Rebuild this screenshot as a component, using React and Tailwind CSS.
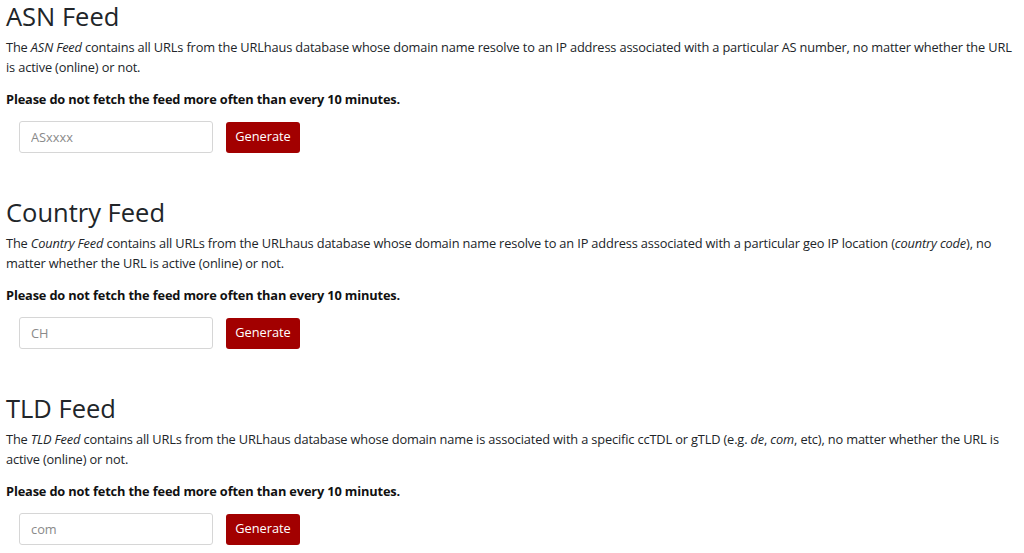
const FEEDS = [
  {
    title: 'ASN Feed',
    name: 'ASN Feed',
    after: (
      <>
        {' '}contains all URLs from the URLhaus database whose domain name resolve to an IP address associated with a
        particular AS number, no matter whether the URL is active (online) or not.
      </>
    ),
    placeholder: 'ASxxxx',
  },
  {
    title: 'Country Feed',
    name: 'Country Feed',
    after: (
      <>
        {' '}contains all URLs from the URLhaus database whose domain name resolve to an IP address associated with a
        particular geo IP location (<em>country code</em>), no matter whether the URL is active (online) or not.
      </>
    ),
    placeholder: 'CH',
  },
  {
    title: 'TLD Feed',
    name: 'TLD Feed',
    after: (
      <>
        {' '}contains all URLs from the URLhaus database whose domain name is associated with a specific ccTDL or gTLD
        (e.g. <em>de</em>, <em>com</em>, etc), no matter whether the URL is active (online) or not.
      </>
    ),
    placeholder: 'com',
  },
];

const FeedSection = ({ feed }) => (
  <section>
    <h2 className="text-[25.5px] leading-[28px] font-normal text-[#212529]">{feed.title}</h2>
    <p className="mt-[7px] text-[12.8px] leading-[20px] tracking-[-0.15px] text-[#212529]">
      The <em>{feed.name}</em>
      {feed.after}
    </p>
    <p className="mt-[12px] text-[12.8px] leading-[20px] tracking-[-0.15px] font-bold text-[#111]">
      Please do not fetch the feed more often than every 10 minutes.
    </p>
    <div className="mt-[12px] ml-[13px] flex items-center gap-[13px]">
      <input
        type="text"
        placeholder={feed.placeholder}
        className="h-[32px] w-[194px] rounded-[3px] border border-[#d6d6d6] bg-white px-[11px] text-[12.8px] text-[#495057] placeholder:text-[#8a8a8a] outline-none"
      />
      <button type="button" className="h-[31px] w-[74px] rounded-[3px] bg-[#a20000] text-[12.8px] text-white">
        Generate
      </button>
    </div>
  </section>
);

export default function App() {
  return (
    <div
      className="flex h-[553px] flex-col gap-[45px] overflow-hidden bg-white pl-[6px] pr-[6px] pt-[2px]"
      style={{ fontFamily: '"Open Sans", "Noto Sans", sans-serif' }}
    >
      {FEEDS.map((feed) => (
        <FeedSection key={feed.title} feed={feed} />
      ))}
    </div>
  );
}
